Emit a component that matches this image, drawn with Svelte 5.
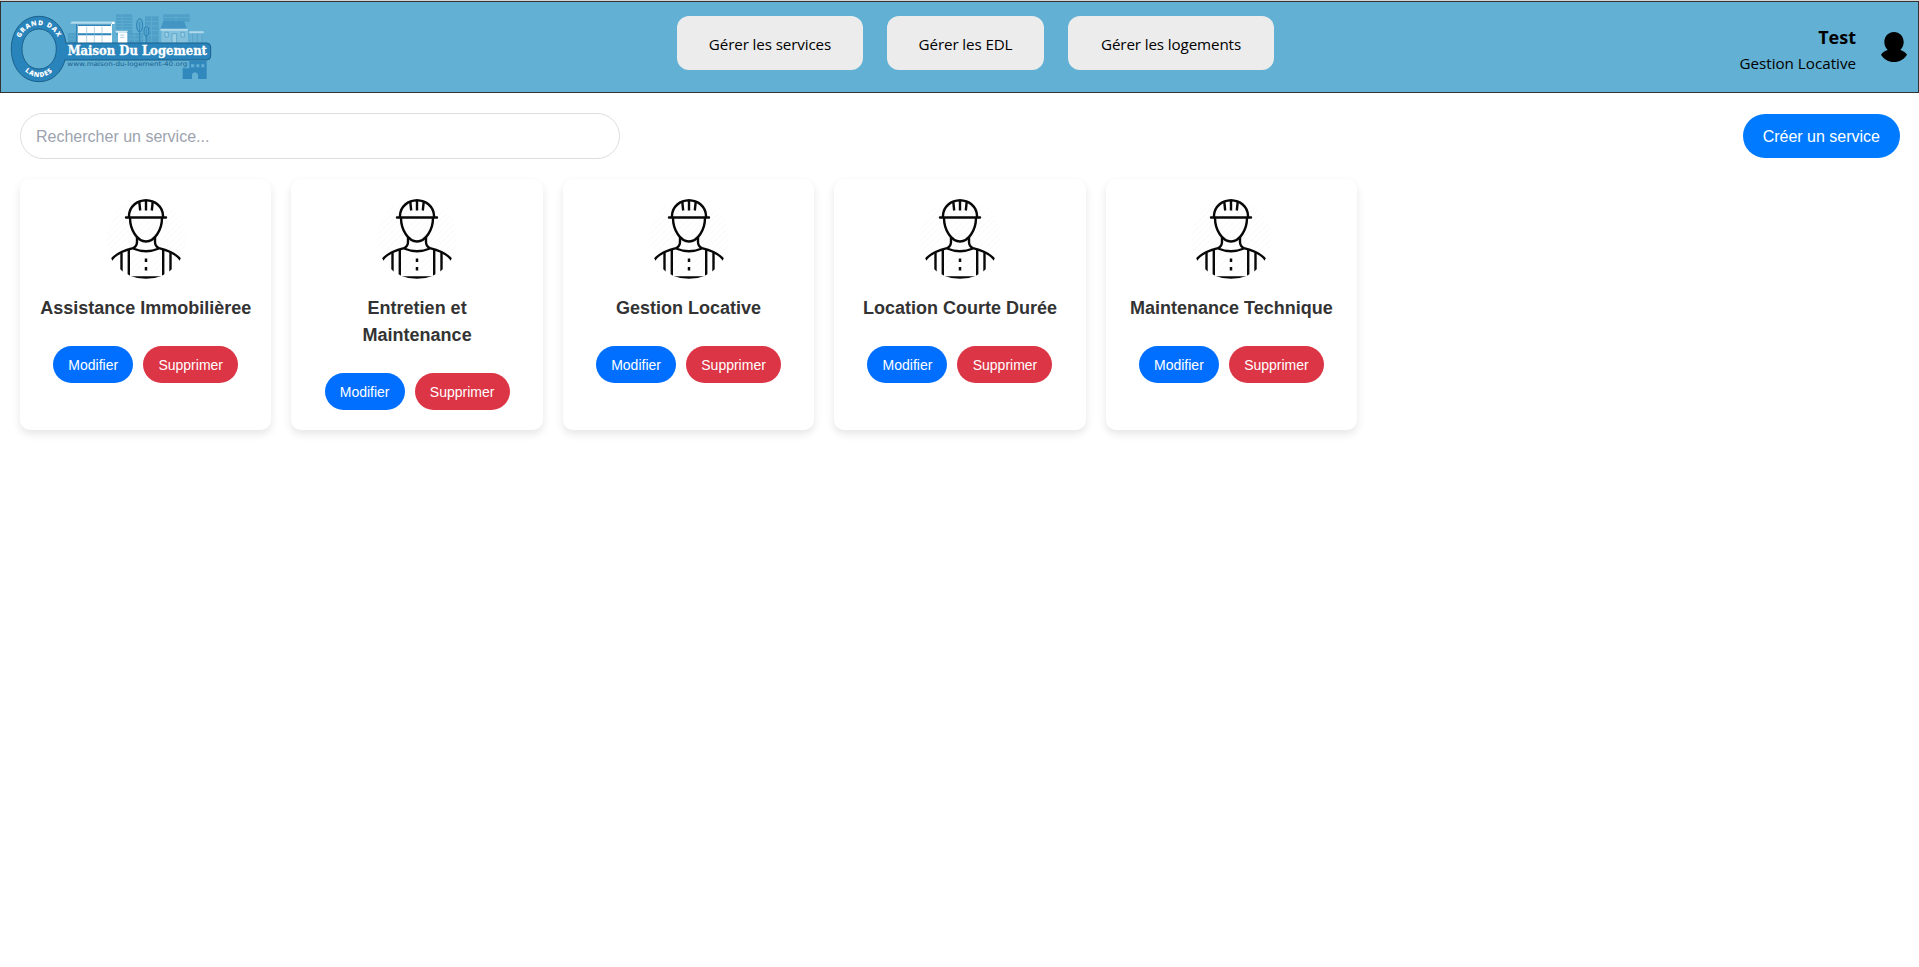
<script>
  const nav = [
    { label: 'Gérer les services', width: 186 },
    { label: 'Gérer les EDL', width: 157 },
    { label: 'Gérer les logements', width: 206 }
  ];
  const services = [
    'Assistance Immobilièree',
    'Entretien et Maintenance',
    'Gestion Locative',
    'Location Courte Durée',
    'Maintenance Technique'
  ];
  let query = $state('');
  const visible = $derived(services.filter((s) => s.toLowerCase().includes(query.toLowerCase())));
</script>

<header>
  <svg class="logo" viewBox="30 39 612 216" role="img" aria-label="Maison Du Logement">
    <!-- skyline -->
    <g fill="#4f9fc8">
      <path d="M204 99h24v31h-24zM348 43h49v62h-49zM381 99h49v31h-49zM435 49h41v81h-41zM490 43h79v22h-79z" />
    </g>
    <g stroke="#5dabd0" stroke-width="3" fill="none">
      <path d="M348 52h49M348 61h49M348 70h49M348 79h49M348 88h49M366 43v60M208 107h18M208 117h18M387 107h42M387 117h42M404 100v30M438 64h36M438 78h36M438 92h36M438 106h36M455 49v81M492 52h76M528 43v20" />
    </g>
    <path d="M214 65h130v7h-8v58h-106V72h-16z" fill="#fff" />
    <path d="M212 67h124v5H212z" fill="#9fd0e5" />
    <path d="M228 72h5v58h-5zM234 73h99v5h-99zM234 100h100v6h-100z" fill="#2c86b9" />
    <path d="M260 80v50M283 80v50M306 80v50" stroke="#8dbfda" stroke-width="2" />
    <path d="M346 92h38l-4 6h-31z" fill="#d7edf6" />
    <path d="M354 98h28v32h-28z" fill="#fff" />
    <path d="M361 105h12M361 112h12" stroke="#7fb8d7" stroke-width="2" />
    <g fill="#5ba9ce" stroke="#277fb4" stroke-width="3">
      <ellipse cx="419" cy="76" rx="9" ry="20" />
      <ellipse cx="439" cy="94" rx="7" ry="14" />
      <path d="M419 66v62M439 86v42" stroke-width="2" />
    </g>
    <path d="M484 88h80v42h-80z" fill="#83c1dc" />
    <path d="M490 63h62l10 26h-82z" fill="#4396c4" />
    <path d="M481 86h82v6h-82zM568 94h43v6h-43z" fill="#b5dbea" />
    <path d="M571 101h37v28h-37z" fill="#6cb3d5" />
    <path d="M578 101v27M592 101v27M606 101v27" stroke="#4f9fc8" stroke-width="2" />
    <g fill="#9bcfe3" stroke="#4b9bc5" stroke-width="2">
      <path d="M495 97h10v14h-10zM543 97h10v14h-10zM516 101h14v29h-14z" />
    </g>
    <!-- key -->
    <path d="M548 205h20v-22h52v54h-26v-15q-9-10-18 0v15h-28z" fill="#3188bc" />
    <path d="M573 193h10v9h-10zM589 193h9v9h-9zM604 193h9v9h-9z" fill="#62afd3" />
    <path d="M180 129h440q12 0 12 12v27q0 12-12 12H188z" fill="#2984bb" stroke="#1b618d" stroke-width="3" />
    <path fill-rule="evenodd" d="M117 49c48 0 82 41 82 98s-34 98-82 98-83-41-83-98 35-98 83-98zm0 38c-29 0-51 25-51 60s22 60 51 60 52-25 52-60-23-60-52-60z" fill="#2984bb" stroke="#1b618d" stroke-width="3" />
    <path d="M182 131h30v47h-30z" fill="#2984bb" />
    <defs>
      <path id="arc-top" d="M56 126C74 59 160 59 178 126" />
      <path id="arc-bottom" d="M60 190C84 245 150 245 174 190" />
    </defs>
    <text class="ring"><textPath href="#arc-top" startOffset="50%" text-anchor="middle">GRAND DAX</textPath></text>
    <text class="ring"><textPath href="#arc-bottom" startOffset="50%" text-anchor="middle">LANDES</textPath></text>
    <text class="brand" x="203" y="165" textLength="418" lengthAdjust="spacingAndGlyphs">Maison Du Logement</text>
    <text class="site" x="202" y="197" textLength="360" lengthAdjust="spacingAndGlyphs">www.maison-du-logement-40.org</text>
  </svg>

  <nav>
    {#each nav as item}
      <button style:width="{item.width}px">{item.label}</button>
    {/each}
  </nav>

  <div class="account">
    <div class="who">
      <strong>Test</strong>
      <span>Gestion Locative</span>
    </div>
    <svg class="avatar" viewBox="0 0 26 30" aria-hidden="true">
      <path d="M13 0c5.400 0 9.700 4.300 9.700 10 0 3.200-1.300 5.900-3.400 8 2.700.7 5.100 2.200 6.700 4.700C23.300 27.200 18.500 30 13 30S2.700 27.200 0 22.700c1.600-2.500 4-4 6.700-4.700-2.100-2.100-3.400-4.800-3.400-8C3.300 4.300 7.600 0 13 0z" />
    </svg>
  </div>
</header>

<main>
  <div class="toolbar">
    <input type="text" placeholder="Rechercher un service..." bind:value={query} />
    <button class="create">Créer un service</button>
  </div>

  <div class="grid">
    {#each visible as name}
      <article>
        <svg class="worker" viewBox="0 0 80 80" aria-hidden="true">
          <defs>
            <clipPath id="round"><circle cx="40" cy="40" r="40" /></clipPath>
            <pattern id="hatch" width="6" height="6" patternUnits="userSpaceOnUse">
              <path d="M-1 7L7-1" stroke="#f9f9f9" stroke-width="1" />
            </pattern>
          </defs>
          <g clip-path="url(#round)" fill="none" stroke="#080808" stroke-width="2.400">
            <rect width="80" height="80" fill="url(#hatch)" stroke="none" />
            <path d="M23 18V16.500C23.500 7.500 31 1.200 40 1.200s16.500 6.300 17 15.300V18M20 18.500h40" stroke-linecap="round" />
            <path d="M33.300 3l.9 8.500M40 2v9.500M46.700 3l-.9 8.500" />
            <path d="M24 19c0 12 7.500 23.500 16 23.500S56 31 56 19" />
            <path d="M31 38v5c0 3-1.500 5-4 6.200C18 51.500 9 55 5 61.500M49 38v5c0 3 1.500 5 4 6.200C62 51.500 71 55 75 61.500M27 49.500c8 3.300 18 3.300 26 0" />
            <path d="M15.500 54v22M22.800 51v28M57.200 51v28M64.500 54v22M24 78.500h32" />
            <path d="M40 59.500v3.500M40 68v3.500" stroke-width="2.500" />
          </g>
        </svg>
        <h3>{name}</h3>
        <div class="actions">
          <button class="edit">Modifier</button>
          <button class="delete">Supprimer</button>
        </div>
      </article>
    {/each}
  </div>
</main>

<style>
  :global(body) {
    background: #fff;
    font-family: 'Liberation Sans', Arial, sans-serif;
    line-height: 1.5;
  }
  :global(#app) { border-top: 1px solid #d3d3d3; }
  button {
    border: 0;
    font: inherit;
    cursor: pointer;
    white-space: nowrap;
  }
  header {
    box-sizing: border-box;
    height: 92px;
    display: grid;
    grid-template-columns: 676px auto 1fr;
    border: 1px solid #333;
    background: #62b0d3;
    color: #000;
    font-family: 'Open Sans', 'Noto Sans', sans-serif;
  }
  .logo {
    width: 204px;
    height: 72px;
    margin: 11px 0 0 9px;
  }
  .ring {
    font: 800 20px 'Open Sans', sans-serif;
    letter-spacing: 2.5px;
    fill: #fff;
  }
  .brand {
    font: 700 38px 'DejaVu Serif', serif;
    fill: #fff;
    stroke: #fff;
    stroke-width: 1;
  }
  .site {
    font: 19px 'DejaVu Sans', sans-serif;
    fill: #1b628f;
  }
  nav {
    display: flex;
    gap: 24px;
    align-items: flex-start;
    padding-top: 14px;
  }
  nav button {
    box-sizing: border-box;
    height: 54px;
    padding: 3px 0 0;
    border-radius: 12px;
    background: #ececec;
    font-size: 15.200px;
    letter-spacing: -0.120px;
    text-align: center;
  }
  .account {
    display: flex;
    justify-content: flex-end;
    align-items: flex-start;
    gap: 25px;
    padding-right: 11px;
  }
  .who {
    display: flex;
    flex-direction: column;
    align-items: flex-end;
    padding-top: 21px;
  }
  .who strong {
    font-size: 18px;
    line-height: 28px;
  }
  .who span {
    font-size: 15.200px;
    line-height: 24px;
  }
  .avatar {
    width: 26px;
    height: 30px;
    margin-top: 30px;
  }
  main { padding: 20px 19px 20px 20px; }
  .toolbar {
    display: flex;
    align-items: center;
    justify-content: space-between;
    margin-bottom: 20px;
  }
  input {
    box-sizing: border-box;
    width: 600px;
    height: 46px;
    padding: 11px 15px 9px;
    border: 1px solid #ddd;
    border-radius: 25px;
    background: #fff;
    font: 16px/24px 'Liberation Sans', Arial, sans-serif;
    outline: none;
  }
  input::placeholder { color: #9ca3af; }
  .create {
    padding: 11px 20px 9px;
    border-radius: 25px;
    background: #007bff;
    color: #fff;
    font-size: 16px;
  }
  .grid {
    display: grid;
    grid-template-columns: repeat(7, minmax(0, 1fr));
    gap: 20px;
  }
  article {
    display: flex;
    flex-direction: column;
    align-items: center;
    padding: 20px;
    border-radius: 10px;
    background: #fff;
    box-shadow: 0 4px 8px rgba(0, 0, 0, 0.1);
    text-align: center;
  }
  .worker {
    width: 80px;
    height: 80px;
    margin-bottom: 16px;
  }
  h3 {
    margin: 0 0 24px;
    color: #333;
    font-size: 18px;
    line-height: 27px;
    font-weight: 700;
  }
  .actions {
    display: flex;
    gap: 10px;
  }
  .actions button {
    box-sizing: border-box;
    padding: 9px 0 7px;
    border-radius: 20px;
    color: #fff;
    font-size: 14px;
    line-height: 21px;
  }
  .actions .edit {
    width: 80px;
    background: #006fff;
  }
  .actions .delete {
    width: 95px;
    background: #dc3545;
  }
</style>
